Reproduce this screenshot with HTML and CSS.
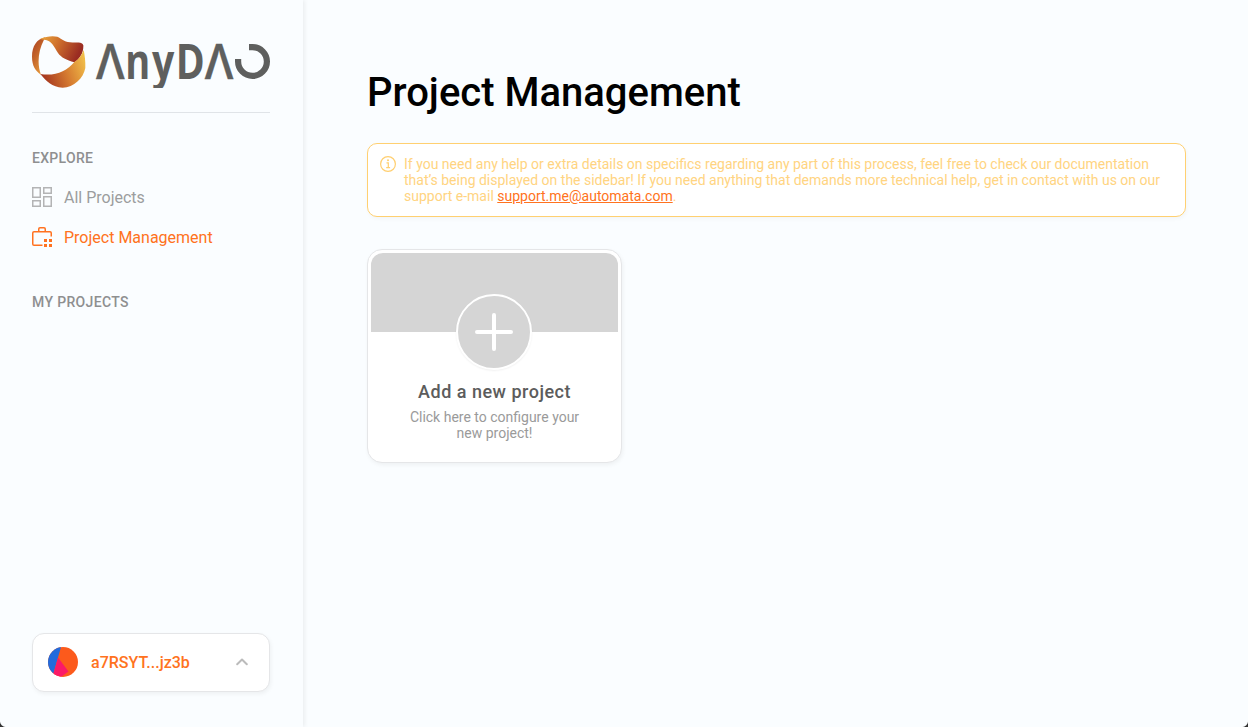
FILE: index.html
```html
<!DOCTYPE html>
<html lang="en">
<head>
<meta charset="utf-8">
<title>Project Management</title>
<link rel="stylesheet" href="styles.css">
</head>
<body>
<div class="app">
  <aside class="sidebar">
    <div class="brand">
      <svg class="logo" viewBox="0 0 238 52" role="img" aria-label="AnyDAO">
        <defs>
          <linearGradient id="left" x1="0" y1="0" x2=".6" y2="1"><stop offset="0" stop-color="#a63c22"/><stop offset=".5" stop-color="#c4652a"/><stop offset="1" stop-color="#e5993c"/></linearGradient>
          <linearGradient id="top" x1="0" y1="0" x2="1" y2=".3"><stop offset="0" stop-color="#eaa83e"/><stop offset=".45" stop-color="#cf702c"/><stop offset="1" stop-color="#9a2c22"/></linearGradient>
          <linearGradient id="bottom" x1="0" y1=".5" x2="1" y2=".2"><stop offset="0" stop-color="#a63820"/><stop offset=".5" stop-color="#d57a30"/><stop offset="1" stop-color="#f2c14a"/></linearGradient>
        </defs>
        <g transform="translate(-12 -11) scale(.33333)">
          <path fill="url(#left)" d="M76 37C50 42 36 64 36 95C36 122 46 138 63 149C51 118 54 78 72 44Z"/>
          <path fill="url(#top)" d="M60 42C78 33 100 32 112 35C126 41 130 50 150 52C170 54 186 50 190 61C191 82 180 102 163 112C139 105 124 98 114 84C102 66 97 46 72 44Z"/>
          <path fill="url(#bottom)" d="M61 147C104 154 140 140 163 111C176 103 186 90 191 75C194 90 197 110 196 129C190 160 162 187 128 188C96 187 78 167 61 147Z"/>
        </g>
        <g class="wordmark">
          <text class="peak" x="64" y="43" textLength="28.600" lengthAdjust="spacingAndGlyphs">Λ</text>
          <text x="93.300" y="43" textLength="25" lengthAdjust="spacingAndGlyphs">n</text>
          <text x="120" y="43" textLength="22.300" lengthAdjust="spacingAndGlyphs">y</text>
          <text x="143.700" y="43" textLength="29" lengthAdjust="spacingAndGlyphs">D</text>
          <text class="peak" x="172.700" y="43" textLength="28.600" lengthAdjust="spacingAndGlyphs">Λ</text>
        </g>
        <path class="ring" d="M206.100 23V25.500A14.400 14.400 0 1 0 220.500 11.100H217"/>
      </svg>
    </div>
    <nav class="menu">
      <h2 class="menu-title">EXPLORE</h2>
      <a class="menu-item">
        <svg class="menu-icon" viewBox="0 0 20 20"><path d="M.75.75h7.500v9.500H.75zM11.750.75h7.500v5.500h-7.500zM.75 13.750h7.500v5.500H.75zM11.750 9.750h7.500v9.500h-7.500z"/></svg>
        <span>All Projects</span>
      </a>
      <a class="menu-item active">
        <svg class="menu-icon" viewBox="0 0 20 20"><path d="M10.500 18.250H2Q.75 18.250.75 17V6Q.75 4.750 2 4.750H18Q19.250 4.750 19.250 6V9.500M6.750 4.750V2Q6.750.75 8 .75H12Q13.250.75 13.250 2V4.750"/><path class="solid" d="M12 12h3v3h-3zM17 12h3v3h-3zM12 17h3v3h-3zM17 17h3v3h-3z"/></svg>
        <span>Project Management</span>
      </a>
      <h2 class="menu-title second">MY PROJECTS</h2>
    </nav>
    <div class="account">
      <svg class="avatar" viewBox="0 0 30 30">
        <clipPath id="round"><circle cx="15" cy="15" r="15"/></clipPath>
        <g clip-path="url(#round)"><path fill="#fc5a1c" d="M0 0h30v30H0z"/><path fill="#236bdc" d="M0 0H13L5 28 0 30z"/><path fill="#fb1a67" d="M10 10.500L20.500 24.500 13 30H4.500z"/></g>
      </svg>
      <span class="address">a7RSYT...jz3b</span>
      <svg class="chevron" viewBox="0 0 12 8"><path d="M1.200 6.300L6 1.500 10.800 6.300"/></svg>
    </div>
  </aside>
  <main class="content">
    <h1 class="title">Project Management</h1>
    <section class="notice">
      <svg class="info" viewBox="0 0 16 16"><circle cx="8" cy="8" r="7.400"/><path d="M6.500 6.900H8.300V11.500M6.200 11.600H10.100"/><circle class="dot" cx="8" cy="4.300" r="1"/></svg>
      <p class="notice-text">If you need any help or extra details on specifics regarding any part of this process, feel free to check our documentation<br>that’s being displayed on the sidebar! If you need anything that demands more technical help, get in contact with us on our<br>support e-mail <a class="mail">support.me@automata.com</a>.</p>
    </section>
    <article class="card">
      <div class="cover"></div>
      <div class="add"><svg class="plus" viewBox="0 0 38 38"><path d="M19 2V36M2 19H36"/></svg></div>
      <h3 class="card-title">Add a new project</h3>
      <p class="card-text">Click here to configure your new project!</p>
    </article>
  </main>
</div>
<i class="corner"></i><i class="corner right"></i>
</body>
</html>
```
FILE: styles.css
```css
* { box-sizing: border-box; }
body { margin: 0; background: #fafdff; font-family: Roboto, "Liberation Sans", sans-serif; overflow: hidden; }
h1, h2, h3, p { margin: 0; }
svg { display: block; flex: none; }

.app { display: flex; height: 727px; }
.sidebar { display: flex; flex: none; flex-direction: column; width: 303px; padding: 36px 33px 35px 32px; box-shadow: 2px 0 4px rgba(0, 0, 0, .06); }
.brand { height: 77px; border-bottom: 1px solid #e0e4e8; }
.logo { width: 238px; height: 52px; overflow: hidden; }
.wordmark { fill: #5e5f5e; font: 700 48px "Open Sans", sans-serif; }
.peak { font-weight: 600; stroke: #5e5f5e; stroke-width: .3; }
.ring { fill: none; stroke: #5e5f5e; stroke-width: 6.200; }

.menu { flex: 1; padding-top: 37px; }
.menu-title { font-size: 14px; line-height: 16px; font-weight: 500; letter-spacing: .3px; color: #8e8f90; }
.menu-item { display: flex; align-items: center; gap: 12px; height: 20px; margin-top: 21px; font-size: 16px; line-height: 20px; color: #9c9d9e; }
.menu-item span { padding-top: 2px; }
.menu-item + .menu-item { margin-top: 20px; }
.menu-icon { width: 20px; height: 20px; fill: none; stroke: #b3b4b5; stroke-width: 1.500; }
.active { color: #ff7220; }
.active .menu-icon { stroke: #ff7220; }
.menu-icon .solid { fill: #ff7220; stroke: none; }
.second { margin-top: 47px; letter-spacing: .35px; }

.account { display: flex; align-items: center; height: 59px; padding: 0 21px 0 15px; border: 1px solid #e5e6e8; border-radius: 12px; background: #fff; box-shadow: 1px 2px 4px rgba(0, 0, 0, .05); }
.avatar { width: 30px; height: 30px; margin-bottom: 2px; }
.address { flex: 1; margin-left: 13px; font-size: 16px; font-weight: 500; color: #ff7220; }
.chevron { width: 12px; height: 8px; margin-bottom: 2px; fill: none; stroke: #bbb; stroke-width: 2; stroke-linecap: round; stroke-linejoin: round; }

.content { flex: 1; min-width: 0; padding: 69px 62px 0 64px; }
.title { font-size: 40px; line-height: 48px; font-weight: 500; color: #000; }
.notice { display: flex; gap: 8px; height: 74px; margin-top: 26px; padding: 12px; border: 1px solid #ffd071; border-radius: 10px; background: #fff; box-shadow: 1px 2px 4px rgba(0, 0, 0, .03); }
.info { width: 16px; height: 16px; fill: none; stroke: #ffcf70; stroke-width: 1.200; }
.info .dot { fill: #ffcf70; stroke: none; }
.notice-text { font-size: 14px; line-height: 16px; white-space: nowrap; color: #ffd481; }
.mail { color: #ff7220; text-decoration: underline; }

.card { display: flex; flex-direction: column; align-items: center; width: 255px; height: 214px; margin-top: 32px; padding: 3px; border: 1px solid #e5e6e8; border-radius: 15px; background: #fff; box-shadow: 1px 2px 4px rgba(0, 0, 0, .05); }
.cover { width: 100%; height: 79px; border-radius: 12px 12px 0 0; background: #d5d5d5; }
.add { display: grid; place-items: center; width: 76px; height: 76px; margin: -38px 1px 0 0; border: 2px solid #fff; border-radius: 50%; background: #d5d5d5; box-shadow: 0 1px 2px rgba(0, 0, 0, .06); z-index: 1; }
.plus { width: 38px; height: 38px; fill: none; stroke: #fff; stroke-width: 4; stroke-linecap: round; }
.card-title { margin-top: 11px; font-size: 18px; line-height: 22px; font-weight: 500; letter-spacing: .5px; color: #5c5c5c; }
.card-text { width: 190px; margin-top: 6px; font-size: 14px; line-height: 16px; text-align: center; color: #9a9a9a; }

.corner { position: absolute; left: 0; bottom: 0; width: 6px; height: 6px; background: radial-gradient(circle at 100% 0, transparent 5.500px, #333 6.500px); }
.corner.right { left: auto; right: 0; background: radial-gradient(circle at 0 0, transparent 5.500px, #333 6.500px); }
```
